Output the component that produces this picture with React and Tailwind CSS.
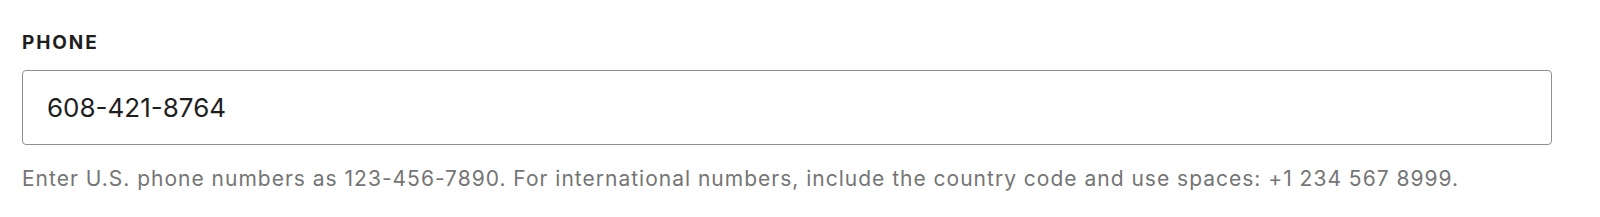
import React from "react";

const App = () => {
  return (
    <div
      className="w-[1600px] h-[217px] bg-white px-[22px] pt-[30px]"
      style={{ fontFamily: "Inter, 'Noto Sans', sans-serif" }}
    >
      <label className="block text-[19px] font-bold tracking-[1.9px] text-[#1e1e1e] leading-[25px]">
        PHONE
      </label>
      <div className="mt-[15px] w-[1530px] h-[75px] border-[1.5px] border-[#8f8f8f] rounded-[4px] flex items-center px-[24px]">
        <span className="text-[26px] text-[#1e1e1e]">608-421-8764</span>
      </div>
      <p className="mt-[19px] text-[21px] leading-[30px] tracking-[1px] text-[#757575]">
        Enter U.S. phone numbers as 123-456-7890. For international numbers, include the country code and use spaces: +1 234 567 8999.
      </p>
    </div>
  );
};

export default App;
